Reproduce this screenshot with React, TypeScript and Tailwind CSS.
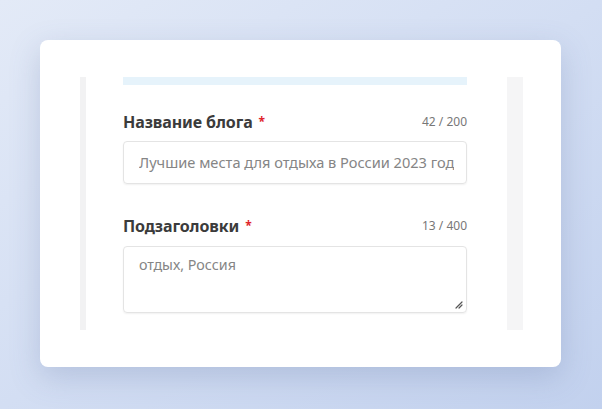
export default function App() {
  return (
    <div className="w-[602px] h-[409px] bg-gradient-to-br from-[#e3eaf7] via-[#d3def3] to-[#c2d1ee] pt-[40px] pl-[40px] font-['Noto_Sans',sans-serif]">
      <div className="w-[521px] h-[327px] bg-white rounded-[8px] shadow-[0_10px_30px_rgba(90,110,160,0.25)] pt-[37px] pl-[40px] flex">
        <div className="w-[6px] h-[253px] bg-[#f2f2f3]" />
        <div className="w-[344px] ml-[37px] flex flex-col">
          <div className="h-[8px] bg-[#e6f3fb]" />
          <div className="mt-[27px] flex items-center justify-between h-[20px]">
            <div className="text-[16px] font-bold text-[#3b3b3b] tracking-[-0.1px] flex items-center">
              Название блога <span className="ml-[6px] text-[12px] text-[#e0242b]">*</span>
            </div>
            <div className="text-[12px] text-[#777]">42 / 200</div>
          </div>
          <div className="mt-[9px] h-[43px] border border-[#e4e4e4] rounded-[4px] shadow-[0_1px_2px_rgba(0,0,0,0.06)] flex items-center pl-[15px] pr-[12px]">
            <div className="flex-1 min-w-0 overflow-hidden whitespace-nowrap text-[14.6px] text-[#858585]">
              Лучшие места для отдыха в России 2023 году
            </div>
          </div>
          <div className="mt-[32px] flex items-center justify-between h-[20px]">
            <div className="text-[16px] font-bold text-[#3b3b3b] tracking-[-0.1px] flex items-center">
              Подзаголовки <span className="ml-[6px] text-[12px] text-[#e0242b]">*</span>
            </div>
            <div className="text-[12px] text-[#777]">13 / 400</div>
          </div>
          <div className="mt-[10px] h-[67px] border border-[#e4e4e4] rounded-[4px] shadow-[0_1px_2px_rgba(0,0,0,0.06)] relative pl-[15px] pt-[5px]">
            <span className="text-[14.3px] text-[#858585]">отдых, Россия</span>
            <svg className="absolute right-[3px] bottom-[3px]" width="9" height="9" viewBox="0 0 9 9">
              <path d="M8 2 L2 8 M8 5 L5 8" stroke="#555" strokeWidth="1.2" strokeLinecap="round" />
            </svg>
          </div>
        </div>
        <div className="w-[16px] h-[253px] bg-[#f5f5f6] ml-[40px]" />
      </div>
    </div>
  );
}
